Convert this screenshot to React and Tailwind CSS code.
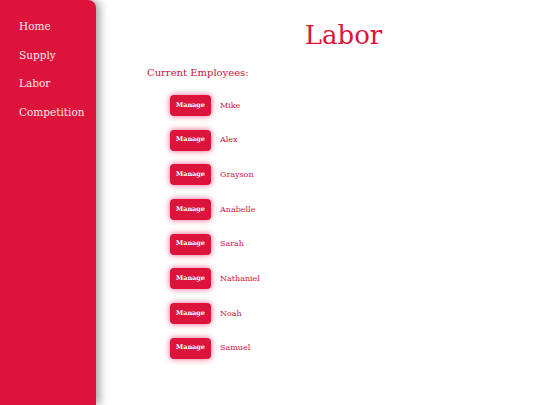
const employees = ['Mike', 'Alex', 'Grayson', 'Anabelle', 'Sarah', 'Nathaniel', 'Noah', 'Samuel'];
const links = ['Home', 'Supply', 'Labor', 'Competition'];

export default function App() {
  return (
    <div className="flex h-[405px] w-[540px] overflow-hidden bg-white font-['DejaVu_Serif',serif]">
      {/* Sidebar */}
      <div className="h-full w-[96px] shrink-0 rounded-tr-lg bg-[#dc143c] pl-[19px] pt-[18px] shadow-[4px_0_8px_rgba(0,0,0,0.35)]">
        <div className="flex flex-col gap-[12.5px]">
          {links.map((l) => (
            <span key={l} className="text-[10.5px] leading-[16px] text-[#fde7ec]">{l}</span>
          ))}
        </div>
      </div>

      {/* Main */}
      <div className="flex-1 pl-[51px]">
        <h1 className="mt-[18px] text-center text-[26px] leading-[34px] text-[#dc143c]">Labor</h1>
        <p className="mt-[14px] text-[10px] leading-[14px] text-[#c8143c]">Current Employees:</p>
        <div className="mt-[15px] flex flex-col gap-[13.7px] pl-[23px]">
          {employees.map((e) => (
            <div key={e} className="flex items-center gap-[9px]">
              <button className="h-[21px] w-[41px] rounded-[4px] bg-[#dc143c] text-[6.5px] font-bold text-white shadow-[0_0_6px_rgba(240,40,90,0.75)]">
                Manage
              </button>
              <span className="text-[8px] text-[#c8143c]">{e}</span>
            </div>
          ))}
        </div>
      </div>
    </div>
  );
}
